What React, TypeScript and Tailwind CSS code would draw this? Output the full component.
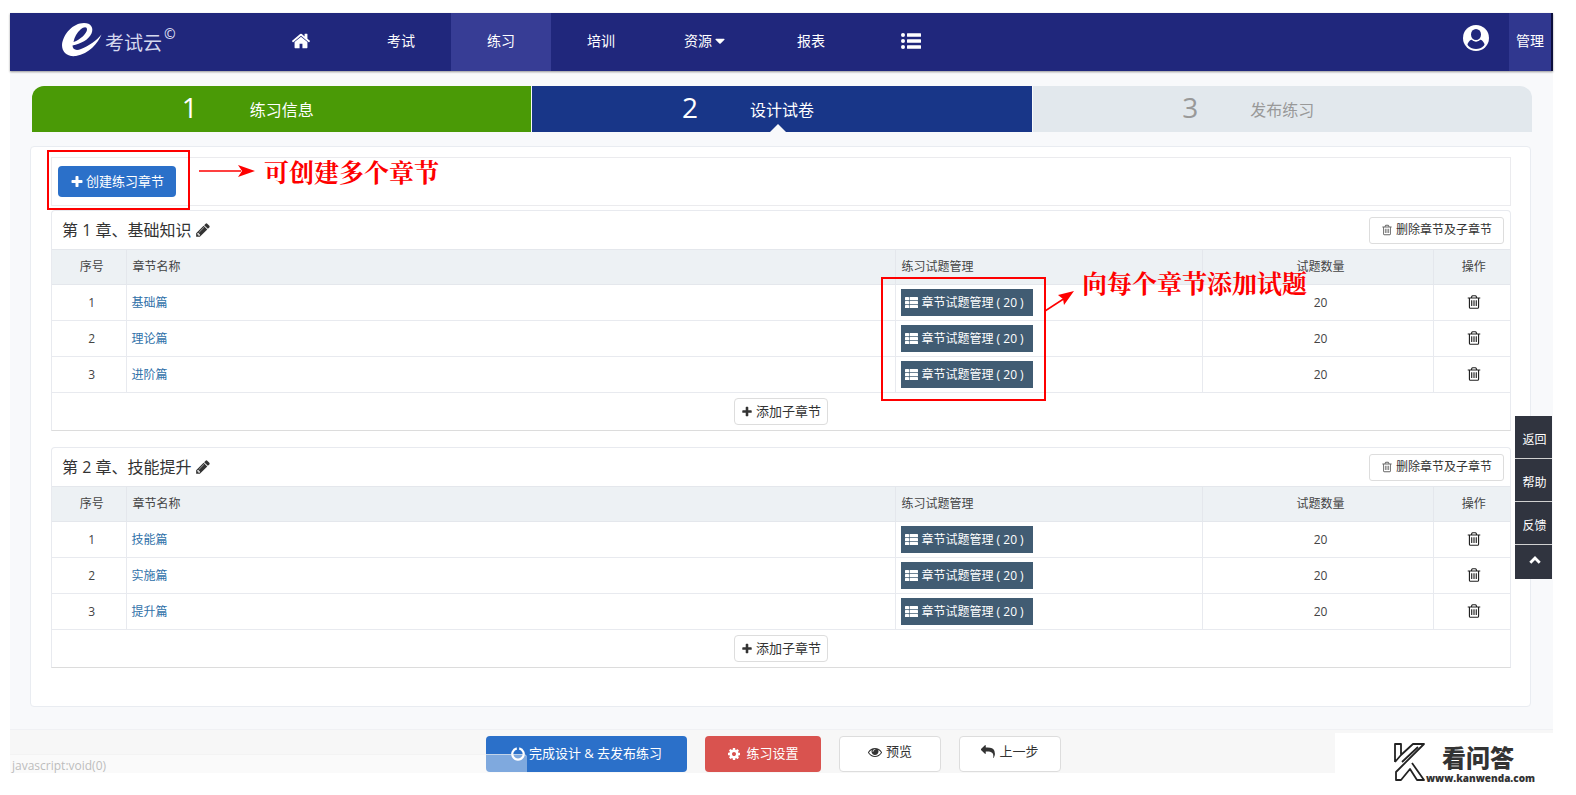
import React from "react";

const FONT = "font-['Open_Sans','Noto_Sans_CJK_SC',sans-serif]";

const GLYPHS = {
  home: "M1472 992v480q0 26-19 45t-45 19h-384v-384h-256v384h-384q-26 0-45-19t-19-45v-480q0-1 .5-3t.5-3l575-474 575 474q1 2 1 6zm223-69l-62 74q-8 9-21 11h-3q-13 0-21-7l-692-577-692 577q-12 8-24 7-13-2-21-11l-62-74q-8-10-7-23.5t11-21.5l719-599q32-26 76-26t76 26l244 204v-195q0-14 9-23t23-9h192q14 0 23 9t9 23v408l219 182q10 8 11 21.5t-7 23.5z",
  plus: "M1600 736v192q0 40-28 68t-68 28h-416v416q0 40-28 68t-68 28h-192q-40 0-68-28t-28-68v-416h-416q-40 0-68-28t-28-68v-192q0-40 28-68t68-28h416v-416q0-40 28-68t68-28h192q40 0 68 28t28 68v416h416q40 0 68 28t28 68z",
  trash: "M704 736v576q0 14-9 23t-23 9h-64q-14 0-23-9t-9-23v-576q0-14 9-23t23-9h64q14 0 23 9t9 23zm256 0v576q0 14-9 23t-23 9h-64q-14 0-23-9t-9-23v-576q0-14 9-23t23-9h64q14 0 23 9t9 23zm256 0v576q0 14-9 23t-23 9h-64q-14 0-23-9t-9-23v-576q0-14 9-23t23-9h64q14 0 23 9t9 23zm128 724v-948h-896v948q0 22 7 40.5t14.5 27 10.5 8.5h832q3 0 10.5-8.5t14.5-27 7-40.5zm-672-1076h448l-48-117q-7-9-17-11h-317q-10 2-17 11zm928 32v64q0 14-9 23t-23 9h-96v948q0 83-47 143.5t-113 60.5h-832q-66 0-113-58.5t-47-141.5v-952h-96q-14 0-23-9t-9-23v-64q0-14 9-23t23-9h309l70-167q15-37 54-63t79-26h320q40 0 79 26t54 63l70 167h309q14 0 23 9t9 23z",
  pencil: "M491 1536l91-91-235-235-91 91v107h128v128h107zm523-928q0-22-22-22-10 0-17 7l-542 542q-7 7-7 17 0 22 22 22 10 0 17-7l542-542q7-7 7-17zm-54-192l416 416-832 832h-416v-416zm683 96q0 53-37 90l-166 166-416-416 166-165q36-38 90-38 53 0 91 38l235 234q37 39 37 91z",
  cog: "M1152 896q0-106-75-181t-181-75-181 75-75 181 75 181 181 75 181-75 75-181zm512-109v222q0 12-8 23t-20 13l-185 28q-19 54-39 91 35 50 107 138 10 12 10 25t-9 23q-27 37-99 108t-94 71q-12 0-26-9l-138-108q-44 23-91 38-16 136-29 186-7 28-36 28h-222q-14 0-24.5-8.5t-11.5-21.5l-28-184q-49-16-90-37l-141 107q-10 9-25 9-14 0-25-11-126-114-165-168-7-10-7-23 0-12 8-23 15-21 51-66.5t54-70.5q-27-50-41-99l-183-27q-13-2-21-12.5t-8-23.5v-222q0-12 8-23t19-13l186-28q14-46 39-92-40-57-107-138-10-12-10-24 0-10 9-23 26-36 98.5-107.5t94.5-71.5q13 0 26 10l138 107q44-23 91-38 16-136 29-186 7-28 36-28h222q14 0 24.5 8.5t11.5 21.5l28 184q49 16 90 37l142-107q9-9 24-9 13 0 25 10 129 119 165 170 7 8 7 22 0 12-8 23-15 21-51 66.5t-54 70.5q26 50 41 98l183 28q13 2 21 12.5t8 23.5z",
  eye: "M1664 960q-152-236-381-353 61 104 61 225 0 185-131.5 316.5t-316.5 131.5-316.5-131.5-131.5-316.5q0-121 61-225-229 117-381 353 133 205 333.5 326.5t434.5 121.5 434.5-121.5 333.5-326.5zm-720-384q0-20-14-34t-34-14q-125 0-214.5 89.5t-89.5 214.5q0 20 14 34t34 14 34-14 14-34q0-86 61-147t147-61q20 0 34-14t14-34zm848 384q0 34-20 69-140 230-376.5 368.5t-499.5 138.5-499.5-139-376.5-368q-20-35-20-69t20-69q140-229 376.5-368t499.5-139 499.5 139 376.5 368q20 35 20 69z",
  reply: "M1792 1120q0 166-127 451-3 7-10.5 24t-13.5 30-13 22q-12 17-28 17-15 0-23.5-10t-8.5-25q0-9 2.5-26.5t2.5-23.5q5-68 5-123 0-112-19.5-200.5t-54-153.5-89-112-114.5-77.5-138.5-48-157.5-25-171.5-7.5h-224v256q0 26-19 45t-45 19-45-19l-512-512q-19-19-19-45t19-45l512-512q19-19 45-19t45 19 19 45v256h224q713 0 875 403 53 134 53 333z",
  caret: "M1408 704q0 26-19 45l-448 448q-19 19-45 19t-45-19l-448-448q-19-19-19-45t19-45 45-19h896q26 0 45 19t19 45z",
};

function Glyph({ name, className }: { name: keyof typeof GLYPHS; className: string }) {
  return (
    <svg viewBox="0 0 1792 1792" fill="currentColor" aria-hidden="true" className={`shrink-0 ${className}`}>
      <path d={GLYPHS[name]} />
    </svg>
  );
}

function ListUlIcon() {
  return (
    <svg viewBox="0 0 20 16" fill="currentColor" aria-hidden="true" className="h-4 w-5">
      {[2, 8, 14].map((y) => (
        <g key={y}>
          <circle cx="2" cy={y} r="2" />
          <rect x="6" y={y - 1.7} width="14" height="3.4" rx="0.5" />
        </g>
      ))}
    </svg>
  );
}

function ThListIcon() {
  return (
    <svg viewBox="0 0 13 11" fill="currentColor" aria-hidden="true" className="h-[11px] w-[13px] shrink-0">
      {[0, 4, 8].map((y) => (
        <g key={y}>
          <rect x="0" y={y} width="4" height="3.300" rx="0.5" />
          <rect x="4.600" y={y} width="8.400" height="3.300" rx="0.5" />
        </g>
      ))}
    </svg>
  );
}

function Logo() {
  return (
    <a href="#" className="flex w-[241px] items-center pl-[52px] text-white">
      <svg viewBox="0 0 40 34" fill="currentColor" aria-hidden="true" className="mb-1 h-[34px] w-10">
        <path
          fillRule="evenodd"
          d="M0 22C1 11 11 0 22 0C29 0 32 5 29.500 10.500C26.500 17 19 20.500 10.500 22.500C10.500 26.500 14 28 19 26C27 23 35 17 39.500 11.500C36 20 27 31 14 33C5 34 0 29 0 22ZM11.500 19C19 16.500 25 10 25 6.500C25 3.500 22 3.500 18.500 6.500C15 9.500 12.500 14 11.500 19Z"
        />
      </svg>
      <span className="ml-[3px] pt-1 text-[19px] text-[#d5d8ee]">考试云</span>
      <span className="mb-4 ml-0.5 text-sm font-semibold text-[#d5d8ee]">©</span>
    </a>
  );
}

function Header() {
  const item = "flex w-[100px] items-center justify-center pb-[3px]";
  return (
    <header className="flex h-[58px] border-r-2 border-[#0c0f3d] bg-[#20277c] text-sm text-white shadow-[0_1px_2px_rgba(0,0,0,0.4)]">
      <Logo />
      <nav className="flex">
        <a href="#" aria-label="首页" className={item}>
          <Glyph name="home" className="size-5" />
        </a>
        <a href="#" className={item}>考试</a>
        <a href="#" className={`${item} bg-[#373d95]`}>练习</a>
        <a href="#" className={item}>培训</a>
        <a href="#" className="flex w-[110px] items-center justify-center pb-[3px]">
          资源
          <Glyph name="caret" className="size-4" />
        </a>
        <a href="#" className={item}>报表</a>
        <a href="#" aria-label="菜单" className={item}>
          <ListUlIcon />
        </a>
      </nav>
      <a href="#" aria-label="用户" className="mr-5 ml-auto flex items-center pb-2">
        <svg viewBox="0 0 26 26" aria-hidden="true" className="size-[26px]">
          <defs>
            <clipPath id="avatar">
              <circle cx="13" cy="13" r="11" />
            </clipPath>
          </defs>
          <circle cx="13" cy="13" r="13" fill="#fff" />
          <g clipPath="url(#avatar)">
            <path d="M4 26V21Q5 16 8.500 14.500Q13 18.500 17.500 14.500Q21 16 22 21V26Z" fill="#20277c" />
          </g>
          <ellipse cx="13" cy="9.800" rx="6.300" ry="6.800" fill="#fff" />
          <ellipse cx="13" cy="9.500" rx="5" ry="5.500" fill="#20277c" />
        </svg>
      </a>
      <a href="#" className="flex w-[42px] items-center justify-center bg-[#30378f] pb-[3px]">管理</a>
    </header>
  );
}

const STEPS = [
  { n: 1, label: "练习信息", style: "rounded-tl-xl bg-[#4a9a06] text-white" },
  { n: 2, label: "设计试卷", style: "bg-[#183688] text-white" },
  { n: 3, label: "发布练习", style: "rounded-tr-xl bg-[#e2e8ed] text-[#999]" },
];

function Steps() {
  return (
    <ol className="mt-[15px] mr-[21px] ml-[22px] grid grid-cols-3 gap-px">
      {STEPS.map((s) => (
        <li key={s.n} className={`relative grid h-[46px] grid-cols-[1fr_auto_1fr] items-center ${s.style}`}>
          <span className="pr-[52px] pb-1 text-right text-[28px] leading-8">{s.n}</span>
          <span className="pt-0.5 text-base">{s.label}</span>
          {s.n === 2 && (
            <svg viewBox="0 0 16 8" aria-hidden="true" className="absolute bottom-0 left-1/2 h-2 w-4 -translate-x-3">
              <path d="M0 8L8 0L16 8Z" fill="#f8f9fb" />
            </svg>
          )}
        </li>
      ))}
    </ol>
  );
}

function Chapter({ title, sections }: { title: string; sections: string[] }) {
  const th = "border-r border-[#e4e7ec] font-normal";
  const td = "border-r border-[#e8eaef]";
  return (
    <section className="mb-4 rounded-t border border-[#e8eaef] border-b-[#dcdcdc]">
      <div className="flex h-[38px] items-center justify-between pr-1.5 pl-2.5">
        <h2 className="flex items-center gap-1 text-base text-[#333]">
          {title}
          <button type="button" aria-label="编辑">
            <Glyph name="pencil" className="size-4" />
          </button>
        </h2>
        <button type="button" className="flex h-[27px] items-center gap-[3px] rounded-[3px] border border-[#ddd] px-[11px] text-xs text-[#333]">
          <Glyph name="trash" className="size-3 text-[#666]" />
          删除章节及子章节
        </button>
      </div>
      <table className="w-full table-fixed border-collapse text-xs text-[#444]">
        <colgroup>
          <col className="w-[74px]" />
          <col />
          <col className="w-[307px]" />
          <col className="w-[231px]" />
          <col className="w-[77px]" />
        </colgroup>
        <thead>
          <tr className="h-[35px] border-y border-[#e4e7ec] bg-[#edf1f4]">
            <th className={`${th} pl-1.5`}>序号</th>
            <th className={`${th} pl-1.5 text-left`}>章节名称</th>
            <th className={`${th} pl-1.5 text-left`}>练习试题管理</th>
            <th className={`${th} pl-1.5`}>试题数量</th>
            <th className="pl-1 font-normal">操作</th>
          </tr>
        </thead>
        <tbody>
          {sections.map((name, i) => (
            <tr key={name} className="h-9 border-b border-[#e8eaef]">
              <td className={`${td} pl-1.5 text-center`}>{i + 1}</td>
              <td className={`${td} pl-[5px]`}>
                <a href="#" className="text-[#3071a9]">{name}</a>
              </td>
              <td className={`${td} pl-[5px]`}>
                <button type="button" className="flex h-[27px] w-[132px] items-center gap-1 bg-[#415c73] pl-1 whitespace-nowrap text-white">
                  <ThListIcon />
                  章节试题管理 ( 20 )
                </button>
              </td>
              <td className={`${td} pl-1.5 text-center`}>20</td>
              <td className="pb-0.5 pl-1 text-center">
                <button type="button" aria-label="删除" className="block w-full">
                  <Glyph name="trash" className="mx-auto size-4 text-[#222]" />
                </button>
              </td>
            </tr>
          ))}
        </tbody>
      </table>
      <div className="flex h-[37px] items-center justify-center">
        <button type="button" className="flex h-[27px] items-center gap-[3px] rounded border border-[#ddd] px-1.5 text-[13px] text-[#333]">
          <Glyph name="plus" className="size-3" />
          添加子章节
        </button>
      </div>
    </section>
  );
}

function Footer() {
  const btn = "flex h-9 items-center justify-center gap-1 rounded text-[13px]";
  return (
    <footer className="relative mt-[22px] flex h-11 justify-center gap-[18px] border-t border-[#f0f1f4] bg-[#f7f7f7] pt-1.5 pr-4">
      <button type="button" className={`${btn} w-[201px] bg-[#2b70c9] text-white`}>
        <svg viewBox="0 0 14 14" aria-hidden="true" className="size-3.5">
          <path d="M5.800 1.400A5.700 5.700 0 1 0 8.200 1.400" fill="none" stroke="#fff" strokeWidth="2.200" />
        </svg>
        完成设计 & 去发布练习
      </button>
      <button type="button" className={`${btn} w-[116px] bg-[#d9534f] text-white`}>
        <Glyph name="cog" className="mr-px size-3.5" />
        练习设置
      </button>
      <button type="button" className={`${btn} w-[102px] border border-[#ddd] bg-white pb-1 text-[#333]`}>
        <Glyph name="eye" className="size-3.5" />
        预览
      </button>
      <button type="button" className={`${btn} w-[102px] border border-[#ddd] bg-white pb-1 text-[#333]`}>
        <Glyph name="reply" className="size-3.5" />
        上一步
      </button>
      <div className="absolute bottom-0 left-0 h-[19px] w-[517px] rounded-tr border-t border-[#eee]/60 bg-white/40 pl-0.5 text-xs leading-[22px] text-[#bdbdbd]">
        javascript:void(0)
      </div>
    </footer>
  );
}

function SideBar() {
  const item = "flex h-[42px] w-full items-center justify-center bg-[#30343f] pt-1.5 pl-0.5";
  return (
    <aside className="absolute top-[416px] right-6 flex w-[37px] flex-col gap-px bg-[#d0d0d0] text-xs text-white">
      <a href="#" className={item}>返回</a>
      <a href="#" className={item}>帮助</a>
      <a href="#" className={item}>反馈</a>
      <button type="button" aria-label="回到顶部" className="flex h-[34px] items-center justify-center bg-[#30343f] pb-1 pl-0.5">
        <svg viewBox="0 0 12 8" aria-hidden="true" className="h-2 w-3">
          <path d="M1.300 6.700L6 2L10.700 6.700" fill="none" stroke="#fff" strokeWidth="2.800" />
        </svg>
      </button>
    </aside>
  );
}

function Annotations() {
  const note = "absolute font-['Noto_Serif_CJK_SC','Noto_Sans_CJK_SC',serif] text-[25px] leading-8 font-bold whitespace-nowrap text-[#fe0000]";
  return (
    <div className="pointer-events-none">
      <div className="absolute top-[150px] left-[47px] h-[60px] w-[143px] border-2 border-[#fe0000]" />
      <svg viewBox="0 0 56 14" className="absolute top-[164px] left-[199px] h-3.5 w-14" aria-hidden="true">
        <path d="M0 7H42" stroke="#fe0000" strokeWidth="1.500" />
        <path d="M56 7L39 1L43 7L39 13Z" fill="#fe0000" />
      </svg>
      <p className={`${note} top-[155px] left-[264px]`}>可创建多个章节</p>
      <div className="absolute top-[277px] left-[881px] h-[124px] w-[165px] border-2 border-[#fe0000]" />
      <svg viewBox="0 0 30 22" className="absolute top-[290px] left-[1045px] h-[22px] w-[30px]" aria-hidden="true">
        <path d="M0 21L20 8" stroke="#fe0000" strokeWidth="1.500" />
        <path d="M29 1L13 5L18 9L19 15Z" fill="#fe0000" />
      </svg>
      <p className={`${note} top-[266px] left-[1082px]`}>向每个章节添加试题</p>
    </div>
  );
}

function Watermark() {
  return (
    <div className="absolute top-[733px] right-0 flex h-[62px] w-[241px] bg-white pt-2 pl-[58px] text-[#333]">
      <svg viewBox="0 0 33 42" className="h-[42px] w-[33px] shrink-0" aria-hidden="true">
        <path
          d="M2 21V3H8V14L20 3H31L3 31V39H8L17 28L24 39H31L19 22M2 21L8 14M9 21L25 6"
          fill="none"
          stroke="#222"
          strokeWidth="1.800"
          strokeLinejoin="round"
        />
      </svg>
      <div>
        <p className="pt-0.5 pl-4 text-2xl leading-[30px] font-black">看问答</p>
        <p className="text-[10px] leading-[10px] font-extrabold">www.kanwenda.com</p>
      </div>
    </div>
  );
}

export default function App() {
  return (
    <div className={`relative min-h-screen overflow-x-hidden bg-white pt-[13px] pr-[23px] pb-[22px] pl-2.5 ${FONT}`}>
      <div className="bg-[#f8f9fb]">
        <Header />
        <Steps />
        <main className="mt-3.5 mr-[22px] ml-5 rounded border border-[#e9ecf1] bg-white pt-2.5 pr-[19px] pb-[22px] pl-5">
          <div className="mb-1 flex h-[49px] items-center border border-[#ebebee] pl-1.5">
            <button type="button" className="flex h-[31px] items-center gap-0.5 rounded bg-[#2b70c9] px-3 text-[13px] text-white">
              <Glyph name="plus" className="size-3.5" />
              创建练习章节
            </button>
          </div>
          <Chapter title="第 1 章、基础知识" sections={["基础篇", "理论篇", "进阶篇"]} />
          <Chapter title="第 2 章、技能提升" sections={["技能篇", "实施篇", "提升篇"]} />
        </main>
        <Footer />
      </div>
      <SideBar />
      <Annotations />
      <Watermark />
    </div>
  );
}
